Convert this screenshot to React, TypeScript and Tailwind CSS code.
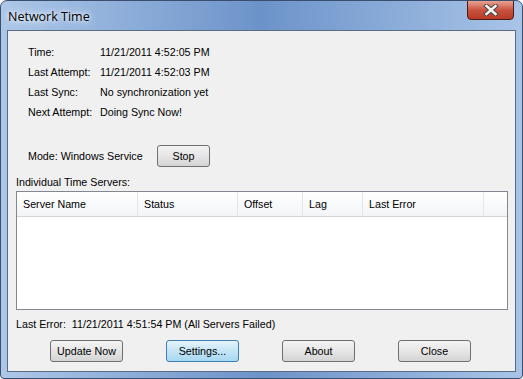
import React from "react";

const rows: [string, string][] = [
  ["Time:", "11/21/2011 4:52:05 PM"],
  ["Last Attempt:", "11/21/2011 4:52:03 PM"],
  ["Last Sync:", "No synchronization yet"],
  ["Next Attempt:", "Doing Sync Now!"],
];

const columns = [
  { name: "Server Name", w: "w-[121px]" },
  { name: "Status", w: "w-[100px]" },
  { name: "Offset", w: "w-[65px]" },
  { name: "Lag", w: "w-[60px]" },
  { name: "Last Error", w: "w-[121px]" },
];

const Btn: React.FC<{ label: string; primary?: boolean; className?: string }> = ({
  label,
  primary,
  className = "",
}) => (
  <button
    type="button"
    className={`h-[22px] rounded-[3px] border text-[10.7px] text-black ${
      primary
        ? "border-[#3c7fb1] bg-gradient-to-b from-[#e5f4fc] via-[#c4e5f6] to-[#a7d8f3]"
        : "border-[#707070] bg-gradient-to-b from-[#f3f3f3] via-[#e6e6e6] to-[#d4d4d4]"
    } ${className}`}
  >
    {label}
  </button>
);

export default function App() {
  return (
    <div
      className="relative w-[523px] h-[379px] overflow-hidden rounded-t-[7px] rounded-b-[4px] border border-[#3a4f6e] bg-gradient-to-r from-[#adc7e8] via-[#6c93c9] to-[#a9c4e7] flex flex-col"
      style={{ fontFamily: '"Liberation Sans", Arial, sans-serif' }}
    >
      {/* Title bar */}
      <div className="h-[29px] flex items-start justify-between pl-[7px] pr-[8px]">
        <span
          className="mt-[7px] text-[12.5px] text-black"
          style={{ fontFamily: '"Open Sans", "Noto Sans", sans-serif', textShadow: "0 0 8px #fff, 0 0 4px #fff" }}
        >
          Network Time
        </span>
        <div className="mt-[-1px] w-[47px] h-[20px] rounded-b-[4px] border border-[#4b1d17] bg-gradient-to-b from-[#e8a293] via-[#c9533f] to-[#b83a24] flex items-center justify-center">
          <svg width="16" height="12" viewBox="0 0 16 12">
            <path d="M3.5 2 L12.5 10 M12.5 2 L3.5 10" stroke="#454545" strokeWidth="4.4" strokeLinecap="square" />
            <path d="M3.5 2 L12.5 10 M12.5 2 L3.5 10" stroke="#f4f4f4" strokeWidth="2.6" strokeLinecap="square" />
          </svg>
        </div>
      </div>

      {/* Client area */}
      <div className="mx-[6px] mb-[6px] flex-1 border border-[#5a6b82] bg-[#f0f0f0] text-[10.7px] text-black flex flex-col">
        <div className="pl-[20px] pt-[11px] flex flex-col">
          {rows.map(([k, v]) => (
            <div key={k} className="h-[20px] flex items-center">
              <span className="w-[72px]">{k}</span>
              <span>{v}</span>
            </div>
          ))}
          <div className="mt-[23px] h-[22px] flex items-center">
            <span className="w-[129px]">Mode: Windows Service</span>
            <Btn label="Stop" className="w-[53px]" />
          </div>
        </div>

        <div className="pl-[8px] mt-[7px] h-[16px] flex items-center">Individual Time Servers:</div>

        <div className="ml-[8px] mt-[1px] w-[492px] h-[119px] border border-[#828790] bg-white flex flex-col">
          <div className="h-[25px] flex border-b border-[#d5d5d5] bg-gradient-to-b from-[#ffffff] to-[#f3f4f6]">
            {columns.map((c) => (
              <div key={c.name} className={`${c.w} border-r border-[#e3e5e8] flex items-center pl-[6px] pt-[1px]`}>
                {c.name}
              </div>
            ))}
            <div className="flex-1" />
          </div>
        </div>

        <div className="pl-[8px] mt-[7px] h-[14px] flex items-center">
          Last Error:&nbsp; 11/21/2011 4:51:54 PM (All Servers Failed)
        </div>

        <div className="pl-[42px] mt-[9px] flex gap-[43px]">
          <Btn label="Update Now" className="w-[73px]" />
          <Btn label="Settings..." primary className="w-[73px]" />
          <Btn label="About" className="w-[73px]" />
          <Btn label="Close" className="w-[73px]" />
        </div>
      </div>
    </div>
  );
}
